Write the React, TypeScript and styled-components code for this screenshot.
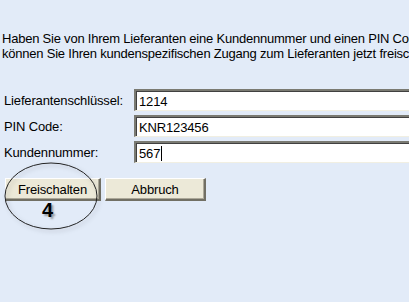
import styled, { createGlobalStyle } from 'styled-components'

const GlobalStyle = createGlobalStyle`
  html, body {
    margin: 0;
    padding: 0;
    background: #e2ebf8;
    overflow: hidden;
  }
  body {
    font-family: "Liberation Sans", Arial, sans-serif;
    font-size: 13px;
    letter-spacing: -0.15px;
    color: #000;
  }
`

interface IField {
  label: string
  value: string
  caret?: boolean
}

const fields: IField[] = [
  { label: 'Lieferantenschlüssel:', value: '1214' },
  { label: 'PIN Code:', value: 'KNR123456' },
  { label: 'Kundennummer:', value: '567', caret: true },
]

function Field({ label, value, caret }: IField) {
  return (
    <Row>
      <Label>{label}</Label>
      <Input>
        {value}
        {caret && <Caret />}
      </Input>
    </Row>
  )
}

function Marker() {
  return (
    <Annotation>
      <svg width="104" height="72" viewBox="0 0 104 72">
        <ellipse cx="51" cy="35" rx="46" ry="33" fill="none" stroke="#222" strokeWidth="1" />
      </svg>
      <Number>4</Number>
    </Annotation>
  )
}

export default function App() {
  return (
    <Page>
      <GlobalStyle />
      <Intro>
        Haben Sie von Ihrem Lieferanten eine Kundennummer und einen PIN Code erhalten,
        <br />
        können Sie Ihren kundenspezifischen Zugang zum Lieferanten jetzt freischalten.
      </Intro>
      <Form>
        {fields.map((f) => (
          <Field key={f.label} {...f} />
        ))}
      </Form>
      <Buttons>
        <Button>Freischalten</Button>
        <Button $wide>Abbruch</Button>
        <Marker />
      </Buttons>
    </Page>
  )
}

const Page = styled.div`
  width: 409px;
  height: 302px;
  position: relative;
  overflow: hidden;
`

const Intro = styled.p`
  margin: 0;
  padding: 31px 0 0 2px;
  line-height: 15px;
  letter-spacing: -0.22px;
  white-space: nowrap;
`

const Form = styled.div`
  margin-top: 28px;
  padding-left: 4px;
  display: flex;
  flex-direction: column;
  gap: 4px;
`

const Row = styled.div`
  display: flex;
  align-items: center;
  height: 22px;
`

const Label = styled.div`
  width: 130px;
  flex: none;
`

const Input = styled.div`
  box-sizing: border-box;
  height: 22px;
  width: 320px;
  flex: none;
  background: #fff;
  border-style: solid;
  border-width: 2px 1px 1px 2px;
  border-color: #7a7a72 #f4f2e8 #f1efe2 #7a7a72;
  box-shadow: inset 1px 1px 0 #404040;
  padding: 2px 0 0 3px;
  display: flex;
  align-items: center;
  line-height: 16px;
`

const Caret = styled.span`
  display: inline-block;
  width: 1px;
  height: 15px;
  background: #000;
  margin-left: 1px;
`

const Buttons = styled.div`
  position: relative;
  margin-top: 15px;
  padding-left: 5px;
  display: flex;
  gap: 4px;
`

const Button = styled.button<{ $wide?: boolean }>`
  box-sizing: border-box;
  width: ${(p) => (p.$wide ? '101px' : '96px')};
  height: 23px;
  background: #ece9d8;
  font-family: "Liberation Sans", Arial, sans-serif;
  font-size: 13px;
  letter-spacing: -0.15px;
  color: #000;
  border-style: solid;
  border-width: 1px 2px 2px 1px;
  border-color: #fff #716f64 #716f64 #fff;
  box-shadow: inset -1px -1px 0 #aca899;
  padding: 0;
`

const Annotation = styled.div`
  position: absolute;
  left: 0;
  top: -17px;
  width: 104px;
  height: 72px;
  pointer-events: none;
  svg {
    filter: drop-shadow(2px 2px 2px rgba(0, 0, 0, 0.25));
  }
`

const Number = styled.span`
  position: absolute;
  left: 42px;
  top: 38px;
  font-family: "Liberation Sans", Arial, sans-serif;
  font-weight: bold;
  font-size: 20px;
  text-shadow: 2px 2px 2px rgba(0, 0, 0, 0.35);
`
